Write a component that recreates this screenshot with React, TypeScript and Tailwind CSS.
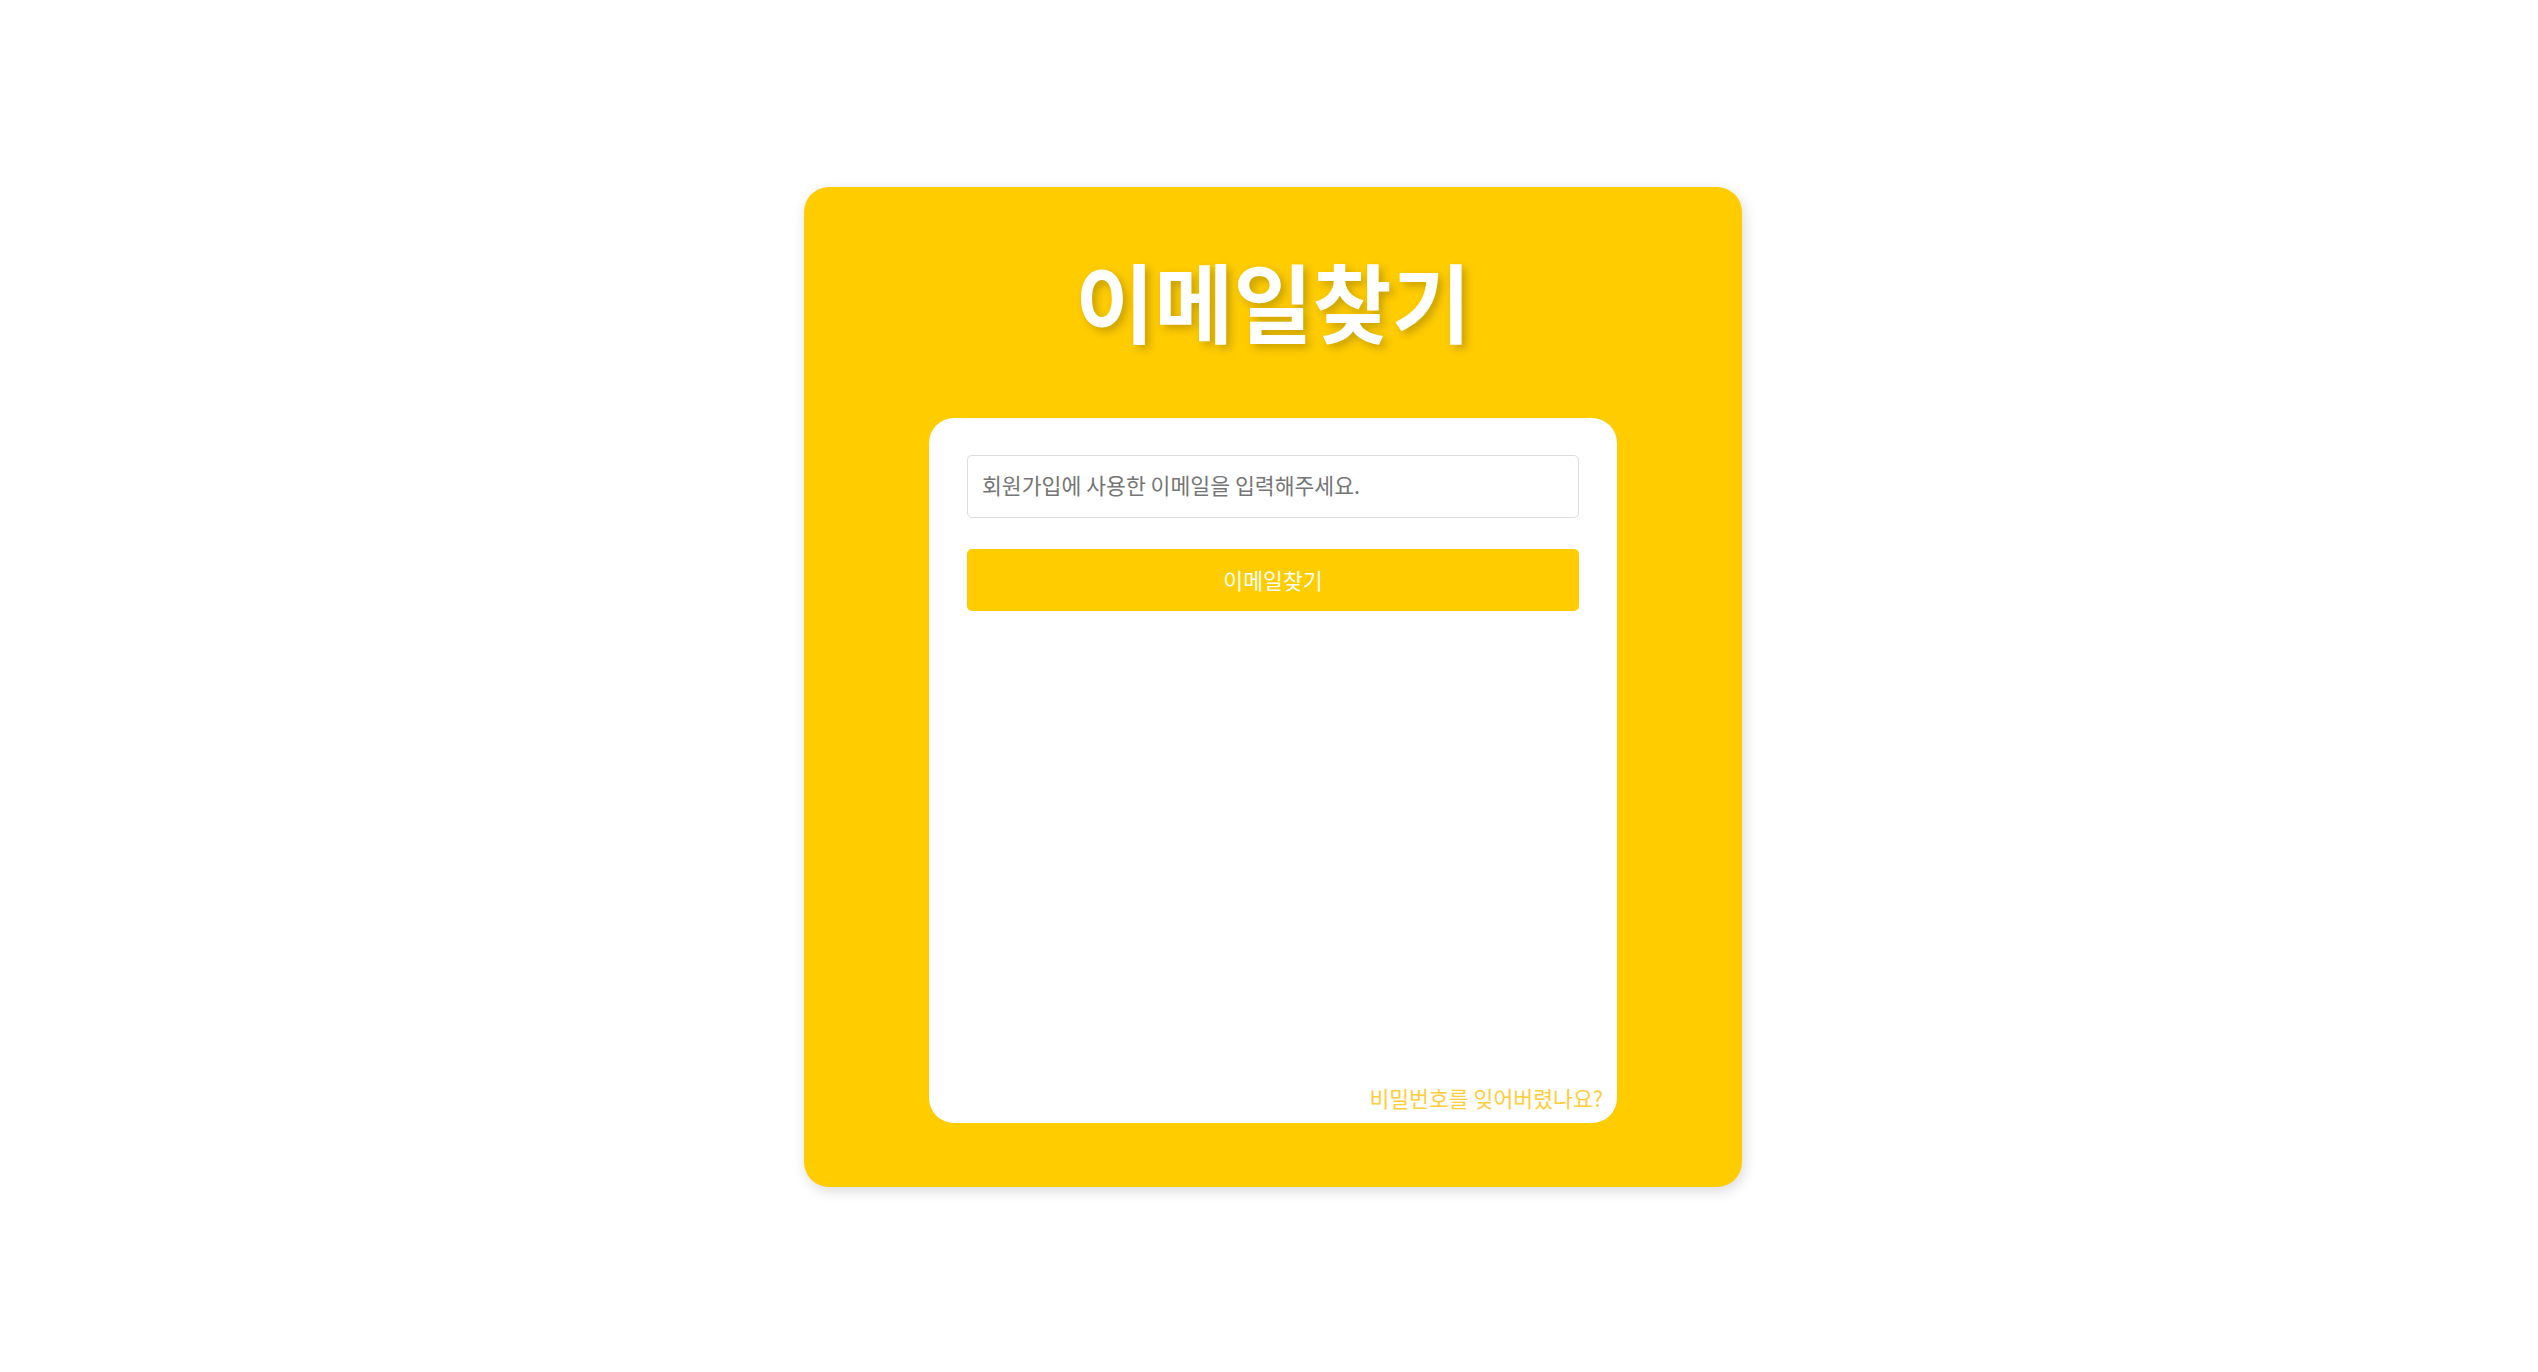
import { useState } from "react";

const font = {
  fontFamily: '"Noto Sans CJK KR", "Noto Sans", sans-serif',
};

export default function App() {
  const [email, setEmail] = useState("");

  return (
    <main
      className="min-h-screen bg-white flex justify-center pt-[187px] pl-[8px]"
      style={font}
    >
      <section className="w-[938px] h-[1000px] bg-[#ffcc00] rounded-[25px] shadow-[2px_4px_14px_rgba(0,0,0,0.15)] flex flex-col items-center pt-[65px]">
        <h1 className="text-[86px] leading-[96px] font-bold text-white [text-shadow:4px_4px_8px_rgba(0,0,0,0.22)]">
          이메일찾기
        </h1>

        <div className="mt-[70px] w-[688px] h-[705px] bg-white rounded-[25px] flex flex-col">
          <div className="px-[38px] pt-[37px] flex flex-col gap-[31px]">
            <input
              type="email"
              value={email}
              onChange={(e) => setEmail(e.target.value)}
              placeholder="회원가입에 사용한 이메일을 입력해주세요."
              className="h-[63px] w-full border border-[#dcdcdc] rounded-[5px] px-[14px] pb-[5px] text-[21.6px] text-[#333] placeholder:text-[#757575] outline-none"
            />
            <button
              type="button"
              className="h-[62px] w-full bg-[#ffcc00] rounded-[5px] text-white text-[21.6px]"
            >
              이메일찾기
            </button>
          </div>

          <a
            href="#"
            className="mt-auto self-end pr-[14px] pb-[10px] text-[21.6px] leading-[30px] text-[#ffcd3a]"
          >
            비밀번호를 잊어버렸나요?
          </a>
        </div>
      </section>
    </main>
  );
}
